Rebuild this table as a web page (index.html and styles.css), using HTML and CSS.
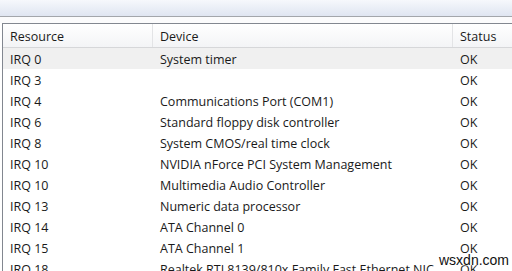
FILE: index.html
```html
<!DOCTYPE html>
<html lang="en">
<head>
  <meta charset="UTF-8" />
  <title>Resources by type</title>
  <link rel="stylesheet" href="styles.css">
</head>
<body>
  <div class="top-band"></div>
  <div class="gap-band"></div>

  <div class="list-box">
    <div class="row head">
      <div class="col res">Resource</div>
      <div class="col dev">Device</div>
      <div class="col stat">Status</div>
    </div>
    <div class="row selected">
      <div class="col res">IRQ 0</div>
      <div class="col dev">System timer</div>
      <div class="col stat">OK</div>
    </div>
    <div class="row">
      <div class="col res">IRQ 3</div>
      <div class="col dev"></div>
      <div class="col stat">OK</div>
    </div>
    <div class="row">
      <div class="col res">IRQ 4</div>
      <div class="col dev">Communications Port (COM1)</div>
      <div class="col stat">OK</div>
    </div>
    <div class="row">
      <div class="col res">IRQ 6</div>
      <div class="col dev">Standard floppy disk controller</div>
      <div class="col stat">OK</div>
    </div>
    <div class="row">
      <div class="col res">IRQ 8</div>
      <div class="col dev">System CMOS/real time clock</div>
      <div class="col stat">OK</div>
    </div>
    <div class="row">
      <div class="col res">IRQ 10</div>
      <div class="col dev">NVIDIA nForce PCI System Management</div>
      <div class="col stat">OK</div>
    </div>
    <div class="row">
      <div class="col res">IRQ 10</div>
      <div class="col dev">Multimedia Audio Controller</div>
      <div class="col stat">OK</div>
    </div>
    <div class="row">
      <div class="col res">IRQ 13</div>
      <div class="col dev">Numeric data processor</div>
      <div class="col stat">OK</div>
    </div>
    <div class="row">
      <div class="col res">IRQ 14</div>
      <div class="col dev">ATA Channel 0</div>
      <div class="col stat">OK</div>
    </div>
    <div class="row">
      <div class="col res">IRQ 15</div>
      <div class="col dev">ATA Channel 1</div>
      <div class="col stat">OK</div>
    </div>
    <div class="row">
      <div class="col res">IRQ 18</div>
      <div class="col dev">Realtek RTL8139/810x Family Fast Ethernet NIC</div>
      <div class="col stat">OK</div>
    </div>
  </div>

  <div class="watermark">wsxdn.com</div>
</body>
</html>
```

FILE: styles.css
```css
body {
  margin: 0;
  width: 512px;
  height: 271px;
  overflow: hidden;
  background: #ffffff;
  font-family: 'Open Sans', 'Noto Sans', sans-serif;
  font-size: 12.5px;
  color: #1a1a1a;
  position: relative;
}

.top-band {
  height: 16px;
  background: linear-gradient(to bottom, #f6f8fc, #dfe5f1);
  border-bottom: 1px solid #a3a6ab;
}

.gap-band {
  height: 6px;
  background: #fbfbfc;
}

.list-box {
  margin-left: 2px;
  border-left: 1px solid #828790;
  border-top: 1px solid #828790;
  background: #ffffff;
}

.row {
  display: flex;
  height: 21px;
  align-items: center;
}

.row.head {
  height: 23px;
  background: linear-gradient(to bottom, #ffffff, #f3f4f6);
  border-bottom: 1px solid #d6d7d9;
}

.row.selected {
  background: #f0f0f0;
}

.col {
  white-space: nowrap;
  overflow: hidden;
  padding-left: 7px;
  padding-top: 1px;
  box-sizing: border-box;
}

.col.res {
  width: 150px;
}

.col.dev {
  width: 300px;
}

.col.stat {
  flex: 1;
}

.row.head .col {
  height: 100%;
  display: flex;
  align-items: center;
  padding-top: 2px;
}

.row.head .col.res,
.row.head .col.dev {
  border-right: 1px solid #e3e4e6;
}

.watermark {
  position: absolute;
  left: 439px;
  top: 252px;
  font-family: 'Liberation Sans', Arial, sans-serif;
  font-size: 14px;
  color: #111111;
  text-shadow: 0 0 2px #fff, 0 0 2px #fff, 0 0 3px #fff;
}
```
